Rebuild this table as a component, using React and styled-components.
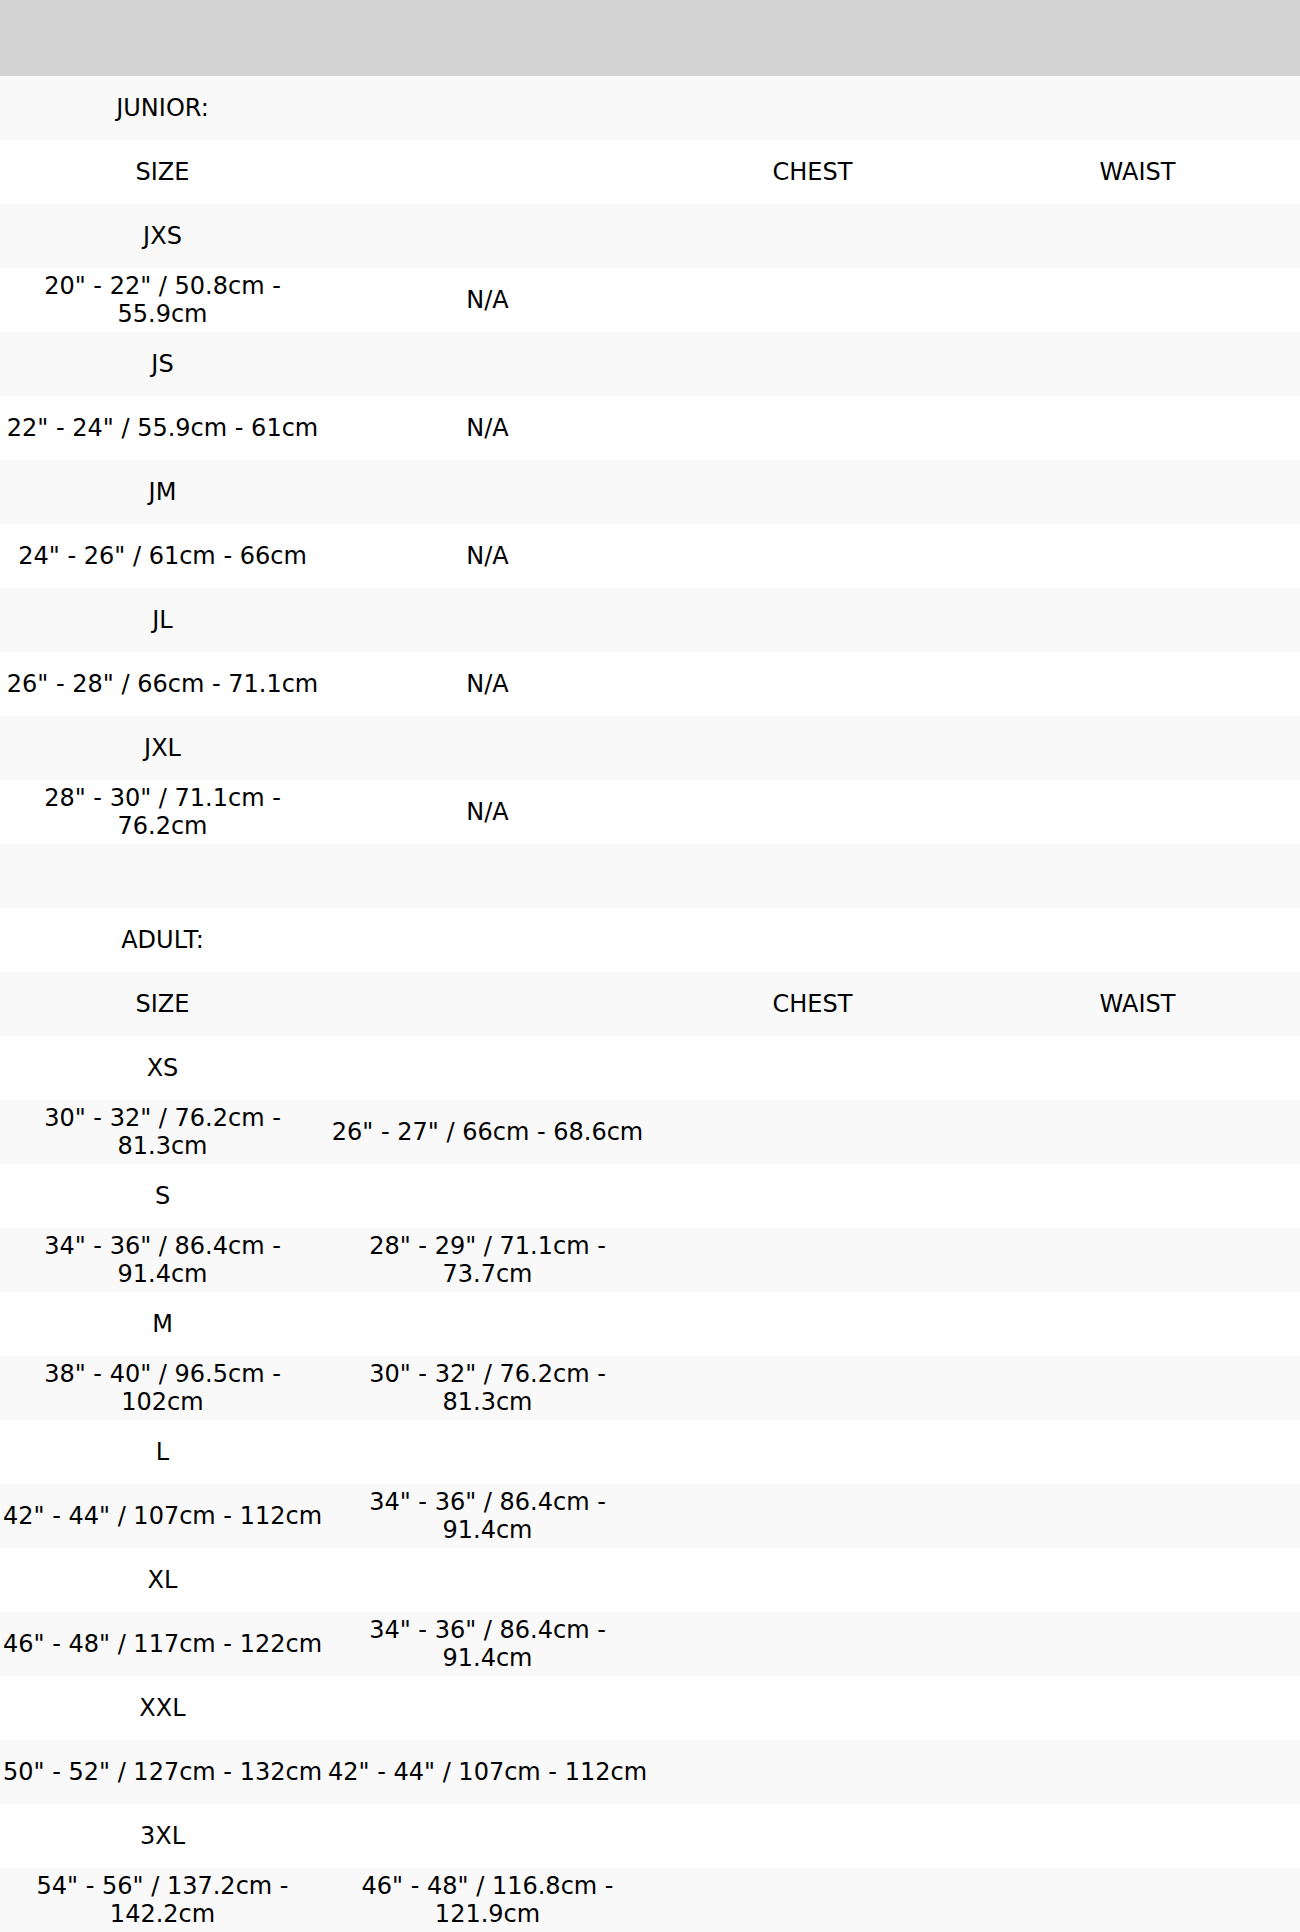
import React from 'react';
import styled, { createGlobalStyle } from 'styled-components';

const junior = [
  ['JXS', '20" - 22" / 50.8cm - 55.9cm', 'N/A'],
  ['JS', '22" - 24" / 55.9cm - 61cm', 'N/A'],
  ['JM', '24" - 26" / 61cm - 66cm', 'N/A'],
  ['JL', '26" - 28" / 66cm - 71.1cm', 'N/A'],
  ['JXL', '28" - 30" / 71.1cm - 76.2cm', 'N/A'],
];

const adult = [
  ['XS', '30" - 32" / 76.2cm - 81.3cm', '26" - 27" / 66cm - 68.6cm'],
  ['S', '34" - 36" / 86.4cm - 91.4cm', '28" - 29" / 71.1cm - 73.7cm'],
  ['M', '38" - 40" / 96.5cm - 102cm', '30" - 32" / 76.2cm - 81.3cm'],
  ['L', '42" - 44" / 107cm - 112cm', '34" - 36" / 86.4cm - 91.4cm'],
  ['XL', '46" - 48" / 117cm - 122cm', '34" - 36" / 86.4cm - 91.4cm'],
  ['XXL', '50" - 52" / 127cm - 132cm', '42" - 44" / 107cm - 112cm'],
  ['3XL', '54" - 56" / 137.2cm - 142.2cm', '46" - 48" / 116.8cm - 121.9cm'],
];

function Seccion({ titulo, filas }) {
  return (
    <>
      <Fila>
        <Celda>{titulo}</Celda>
        <Celda />
        <Celda />
        <Celda />
      </Fila>
      <Fila>
        <Celda>SIZE</Celda>
        <Celda />
        <Celda>CHEST</Celda>
        <Celda>WAIST</Celda>
      </Fila>
      {filas.map(([talla, pecho, cintura]) => (
        <React.Fragment key={talla}>
          <Fila>
            <Celda>{talla}</Celda>
            <Celda />
            <Celda />
            <Celda />
          </Fila>
          <Fila>
            <Celda>{pecho}</Celda>
            <Celda>{cintura}</Celda>
            <Celda />
            <Celda />
          </Fila>
        </React.Fragment>
      ))}
    </>
  );
}

export default function App() {
  return (
    <>
      <Global />
      <Tabla>
        <thead>
          <Encabezado>
            <th colSpan={4} />
          </Encabezado>
        </thead>
        <tbody>
          <Seccion titulo="JUNIOR:" filas={junior} />
          <Fila>
            <Celda />
            <Celda />
            <Celda />
            <Celda />
          </Fila>
          <Seccion titulo="ADULT:" filas={adult} />
        </tbody>
      </Tabla>
    </>
  );
}

const Global = createGlobalStyle`
  body {
    margin: 0;
    background: #ffffff;
    font-family: "DejaVu Sans", Verdana, sans-serif;
    color: #000000;
  }
`;

const Tabla = styled.table`
  width: 100%;
  border-collapse: collapse;
  table-layout: fixed;
  font-size: 24px;
`;

const Encabezado = styled.tr`
  height: 76px;
  background-color: #d3d3d3;
`;

const Fila = styled.tr`
  height: 64px;

  &:nth-child(odd) {
    background-color: #f9f9f9;
  }
`;

const Celda = styled.td`
  padding: 0 2px;
  text-align: center;
  vertical-align: middle;
  line-height: normal;
`;
